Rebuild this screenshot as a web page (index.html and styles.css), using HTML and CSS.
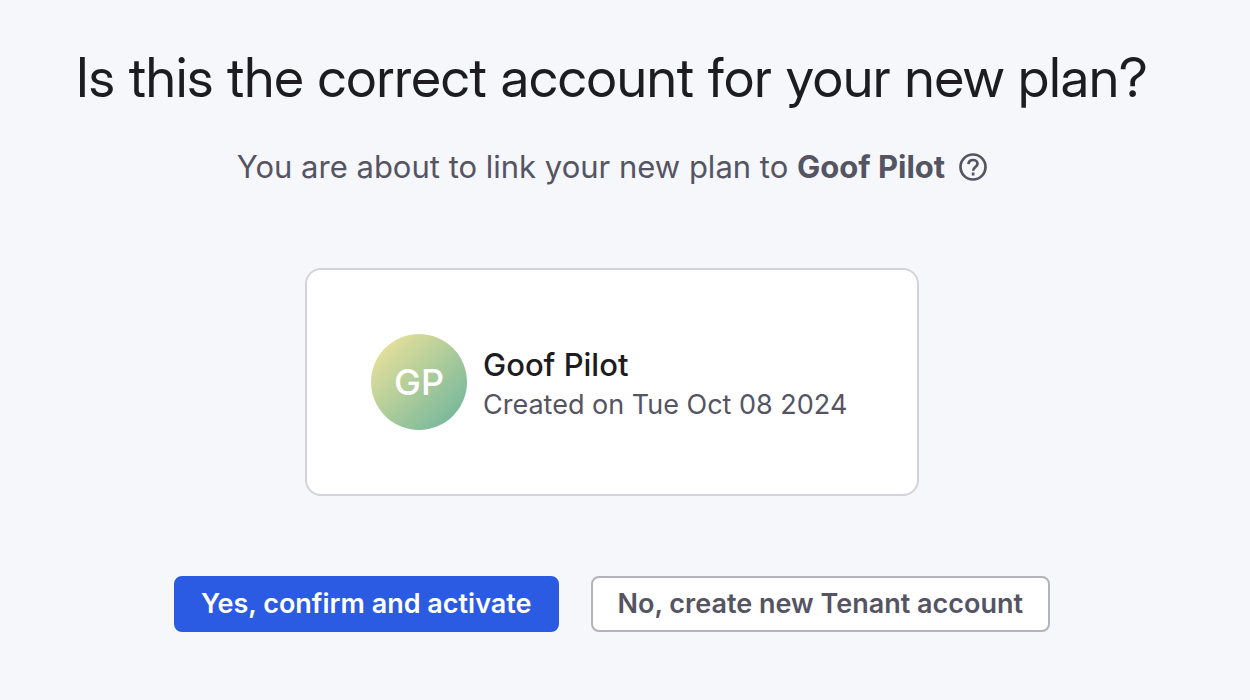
FILE: index.html
```html
<!DOCTYPE html>
<html lang="en">
<head>
<meta charset="utf-8">
<title>Confirm account</title>
<link rel="stylesheet" href="styles.css">
</head>
<body>
<main class="page">
  <h1 class="title">Is this the correct account for your new plan?</h1>
  <p class="subtitle">
    <span>You are about to link your new plan to <strong>Goof Pilot</strong></span>
    <button class="help" type="button" aria-label="Help">
      <svg viewBox="0 0 28 28" width="28" height="28" fill="none" stroke="currentColor" stroke-width="2.700">
        <circle cx="14" cy="14" r="12.500"/>
        <path d="M9.400 11.200C9.700 8.600 11.500 7 14 7c2.600 0 4.500 1.600 4.500 3.800 0 3.200-4.400 3.400-4.400 7"/>
        <path d="M14.100 19.500v3"/>
      </svg>
    </button>
  </p>
  <section class="card">
    <div class="avatar">GP</div>
    <div class="account">
      <h2 class="name">Goof Pilot</h2>
      <p class="created">Created on Tue Oct 08 2024</p>
    </div>
  </section>
  <div class="actions">
    <button class="button primary" type="button">Yes, confirm and activate</button>
    <button class="button secondary" type="button">No, create new Tenant account</button>
  </div>
</main>
</body>
</html>
```
FILE: styles.css
```css
* { box-sizing: border-box; }
body {
  margin: 0;
  background: #f6f7fb;
  color: #1c1c21;
  font-family: Inter, "Liberation Sans", sans-serif;
}
.page {
  display: flex;
  flex-direction: column;
  align-items: center;
  padding: 43px 26px 68px 0;
}
.title {
  margin: 0;
  font-family: "Inter Display", Inter, "Liberation Sans", sans-serif;
  font-size: 55px;
  line-height: 68px;
  font-weight: 400;
}
.subtitle {
  display: flex;
  align-items: center;
  gap: 14px;
  margin: 36px 0 0;
  color: #555463;
  font-size: 31px;
  line-height: 40px;
}
.help {
  display: flex;
  padding: 0;
  border: 0;
  background: none;
  color: inherit;
}
.card {
  display: flex;
  align-items: center;
  gap: 16px;
  min-width: 614px;
  margin-top: 81px;
  padding: 64px;
  border: 2px solid #d3d3d9;
  border-radius: 16px;
  background: #fff;
}
.avatar {
  display: grid;
  place-items: center;
  width: 96px;
  height: 96px;
  border-radius: 50%;
  background: linear-gradient(135deg, #f6e69a, #66b29c);
  color: #fff;
  font-size: 36px;
  font-weight: 500;
}
.account { padding-top: 6px; }
.name {
  margin: 0;
  font-size: 31px;
  line-height: 40px;
  font-weight: 500;
}
.created {
  margin: 0;
  color: #555463;
  font-size: 27px;
  line-height: 40px;
}
.actions {
  display: flex;
  gap: 32px;
  margin-top: 80px;
}
.button {
  padding: 6px 25px;
  border: 2px solid;
  border-radius: 8px;
  font-family: inherit;
  font-size: 27px;
  line-height: 40px;
  font-weight: 600;
}
.primary { border-color: #2b5be2; background: #2b5be2; color: #fff; }
.secondary { border-color: #b3b2bd; background: #fff; color: #555463; }
```
